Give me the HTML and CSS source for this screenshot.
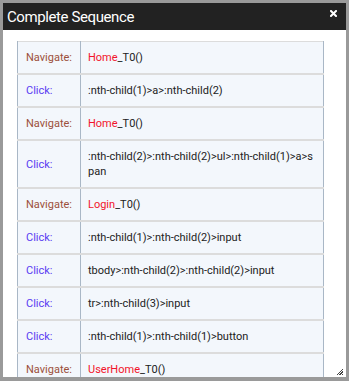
FILE: index.html
```html
<!DOCTYPE html>
<html lang="en">
<head>
  <meta charset="UTF-8" />
  <title>Complete Sequence</title>
  <link rel="stylesheet" href="styles.css">
</head>
<body>
  <div class="dialog">
    <div class="dialog-title">
      <span>Complete Sequence</span>
      <button class="close" title="Close">
        <svg width="7" height="7" viewBox="0 0 7 7"><path d="M1 1L6 6M6 1L1 6" stroke="#fff" stroke-width="2" stroke-linecap="square"/></svg>
      </button>
    </div>
    <div class="dialog-body">
      <table class="steps">
        <colgroup><col class="col-action"><col></colgroup>
        <tr><td class="nav">Navigate:</td><td><span class="page">Home</span>_T0()</td></tr>
        <tr><td class="click">Click:</td><td>:nth-child(1)&gt;a&gt;:nth-child(2)</td></tr>
        <tr><td class="nav">Navigate:</td><td><span class="page">Home</span>_T0()</td></tr>
        <tr><td class="click">Click:</td><td>:nth-child(2)&gt;:nth-child(2)&gt;ul&gt;:nth-child(1)&gt;a&gt;span</td></tr>
        <tr><td class="nav">Navigate:</td><td><span class="page">Login</span>_T0()</td></tr>
        <tr><td class="click">Click:</td><td>:nth-child(1)&gt;:nth-child(2)&gt;input</td></tr>
        <tr><td class="click">Click:</td><td>tbody&gt;:nth-child(2)&gt;:nth-child(2)&gt;input</td></tr>
        <tr><td class="click">Click:</td><td>tr&gt;:nth-child(3)&gt;input</td></tr>
        <tr><td class="click">Click:</td><td>:nth-child(1)&gt;:nth-child(1)&gt;button</td></tr>
        <tr><td class="nav">Navigate:</td><td><span class="page">UserHome</span>_T0()</td></tr>
        <tr><td class="click">Click:</td><td>:nth-child(2)&gt;a</td></tr>
        <tr><td class="nav">Navigate:</td><td><span class="page">Profile</span>_T0()</td></tr>
        <tr><td class="click">Click:</td><td>:nth-child(1)&gt;:nth-child(2)&gt;input</td></tr>
        <tr><td class="click">Click:</td><td>form&gt;:nth-child(3)&gt;button</td></tr>
        <tr><td class="nav">Navigate:</td><td><span class="page">UserHome</span>_T0()</td></tr>
        <tr><td class="click">Click:</td><td>:nth-child(3)&gt;a</td></tr>
        <tr><td class="nav">Navigate:</td><td><span class="page">Home</span>_T0()</td></tr>
      </table>
    </div>
    <div class="grip"></div>
  </div>
</body>
</html>
```

FILE: styles.css
```css
body {
  margin: 0;
  padding: 3px;
  background: #9a9a9a;
  font-family: 'Roboto', 'Liberation Sans', sans-serif;
}

.dialog {
  position: relative;
  width: 343px;
  height: 374px;
  background: #fff;
  display: flex;
  flex-direction: column;
}

.dialog-title {
  height: 27px;
  background: #222;
  color: #fff;
  font-size: 15px;
  letter-spacing: -0.4px;
  display: flex;
  align-items: center;
  justify-content: space-between;
  padding: 0 9px 0 4px;
  flex-shrink: 0;
}

.close {
  background: none;
  border: none;
  padding: 0;
  display: flex;
  margin-top: -7px;
}

.dialog-body {
  flex: 1;
  overflow-y: scroll;
  padding: 11px 16px 0 14px;
}

.dialog-body::-webkit-scrollbar {
  width: 6px;
}

.dialog-body::-webkit-scrollbar-track {
  background: #ebebeb;
}

.dialog-body::-webkit-scrollbar-thumb {
  background: #a3a1a1;
}

.steps {
  width: 307px;
  table-layout: fixed;
  border-collapse: collapse;
  font-size: 11px;
  line-height: 15px;
  color: #222;
  border-top: 1px solid #dcdcdc;
}

.col-action {
  width: 63px;
}

.steps td {
  background: #f3f7fc;
  padding: 8px 9px 8px 7px;
  border-left: 1px solid #a9b7c6;
  border-right: 1px solid #a9b7c6;
  border-bottom: 2px solid #dcdcdc;
  word-break: break-all;
  vertical-align: middle;
}

.steps td:first-child {
  padding-left: 8px;
  padding-right: 4px;
  white-space: nowrap;
  word-break: normal;
}

.nav {
  color: #9c4f3a;
}

.click {
  color: #5a3cf2;
}

.page {
  color: #f2142a;
}

.grip {
  position: absolute;
  right: 3px;
  bottom: 2px;
  width: 7px;
  height: 7px;
  background: repeating-linear-gradient(135deg, transparent 0 1px, #444 1px 2px);
  clip-path: polygon(100% 0, 100% 100%, 0 100%);
}
```
